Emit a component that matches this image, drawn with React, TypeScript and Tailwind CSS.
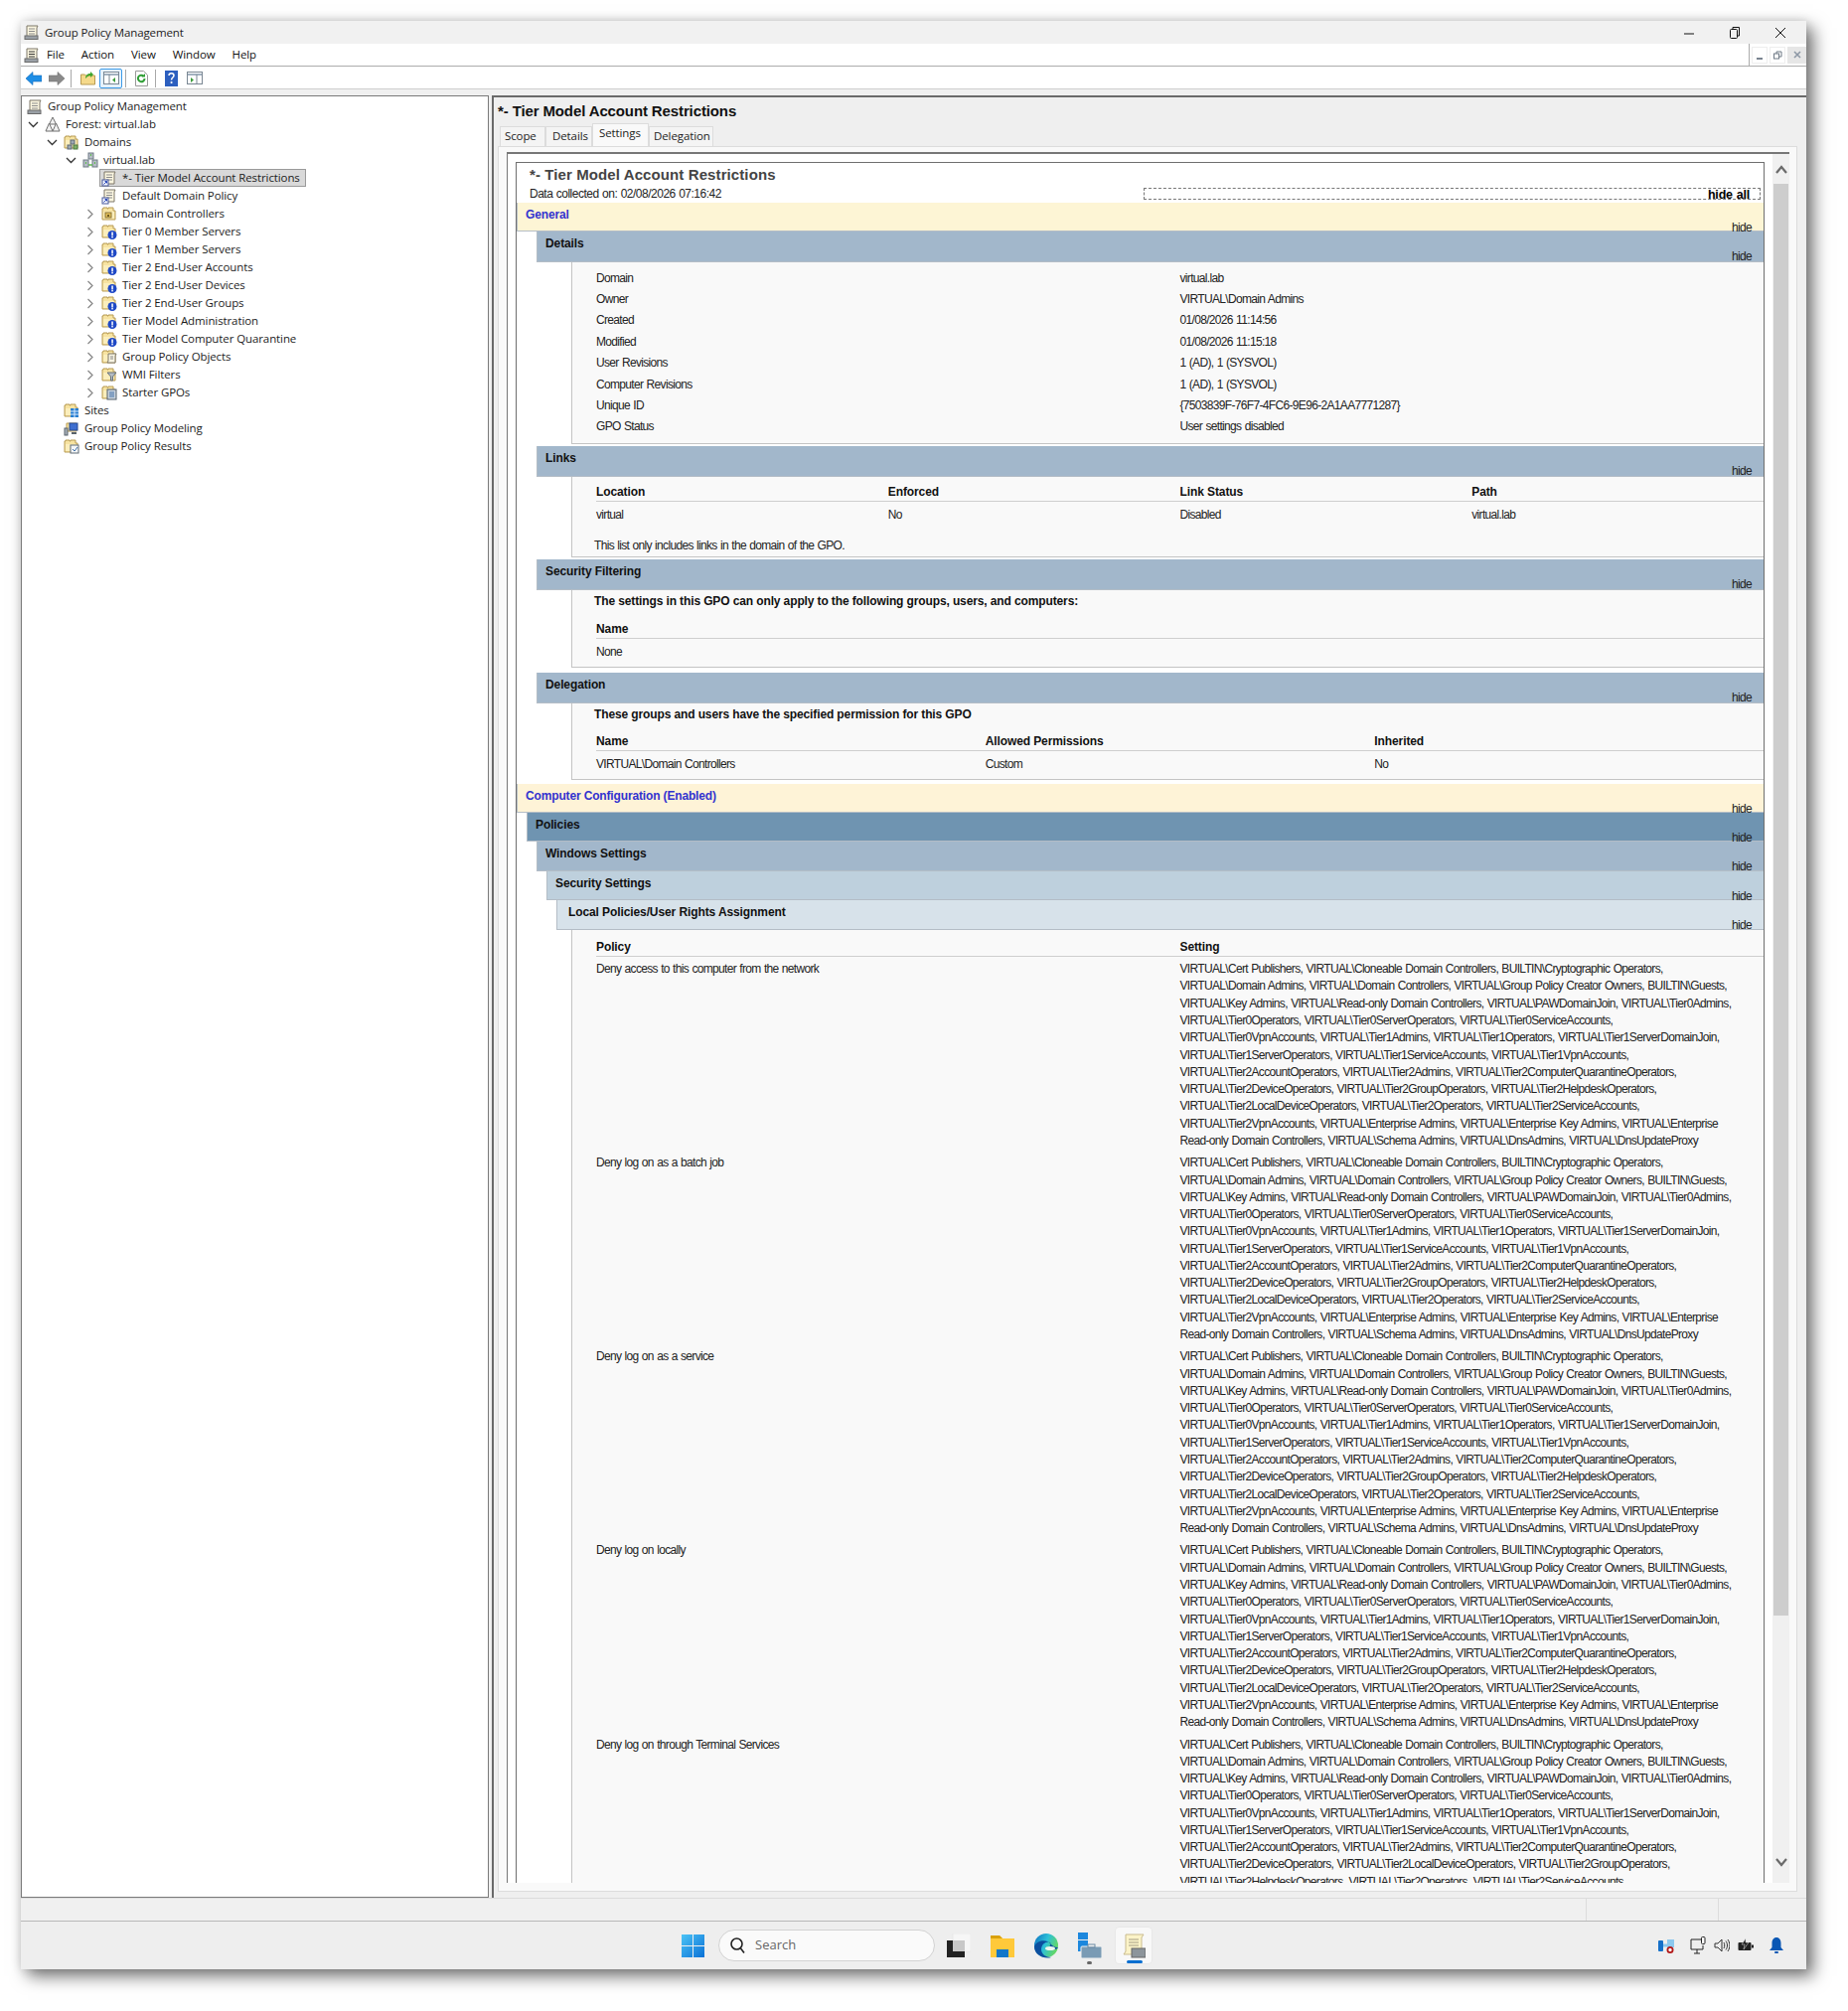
import React from "react";

const LINES = [
  "VIRTUAL\\Cert Publishers, VIRTUAL\\Cloneable Domain Controllers, BUILTIN\\Cryptographic Operators,",
  "VIRTUAL\\Domain Admins, VIRTUAL\\Domain Controllers, VIRTUAL\\Group Policy Creator Owners, BUILTIN\\Guests,",
  "VIRTUAL\\Key Admins, VIRTUAL\\Read-only Domain Controllers, VIRTUAL\\PAWDomainJoin, VIRTUAL\\Tier0Admins,",
  "VIRTUAL\\Tier0Operators, VIRTUAL\\Tier0ServerOperators, VIRTUAL\\Tier0ServiceAccounts,",
  "VIRTUAL\\Tier0VpnAccounts, VIRTUAL\\Tier1Admins, VIRTUAL\\Tier1Operators, VIRTUAL\\Tier1ServerDomainJoin,",
  "VIRTUAL\\Tier1ServerOperators, VIRTUAL\\Tier1ServiceAccounts, VIRTUAL\\Tier1VpnAccounts,",
  "VIRTUAL\\Tier2AccountOperators, VIRTUAL\\Tier2Admins, VIRTUAL\\Tier2ComputerQuarantineOperators,",
  "VIRTUAL\\Tier2DeviceOperators, VIRTUAL\\Tier2GroupOperators, VIRTUAL\\Tier2HelpdeskOperators,",
  "VIRTUAL\\Tier2LocalDeviceOperators, VIRTUAL\\Tier2Operators, VIRTUAL\\Tier2ServiceAccounts,",
  "VIRTUAL\\Tier2VpnAccounts, VIRTUAL\\Enterprise Admins, VIRTUAL\\Enterprise Key Admins, VIRTUAL\\Enterprise",
  "Read-only Domain Controllers, VIRTUAL\\Schema Admins, VIRTUAL\\DnsAdmins, VIRTUAL\\DnsUpdateProxy",
];
const LAST = [
  ...LINES.slice(0, 7),
  "VIRTUAL\\Tier2DeviceOperators, VIRTUAL\\Tier2LocalDeviceOperators, VIRTUAL\\Tier2GroupOperators,",
  "VIRTUAL\\Tier2HelpdeskOperators, VIRTUAL\\Tier2Operators, VIRTUAL\\Tier2ServiceAccounts,",
  "VIRTUAL\\Tier2VpnAccounts, VIRTUAL\\Enterprise Admins, VIRTUAL\\Enterprise Key Admins, VIRTUAL\\Enterprise",
  "Read-only Domain Controllers, VIRTUAL\\Schema Admins, VIRTUAL\\DnsAdmins, VIRTUAL\\DnsUpdateProxy",
];
const POLICIES: [string, string[]][] = [
  ["Deny access to this computer from the network", LINES],
  ["Deny log on as a batch job", LINES],
  ["Deny log on as a service", LINES],
  ["Deny log on locally", LINES],
  ["Deny log on through Terminal Services", LAST],
];
const DETAILS = [
  ["Domain", "virtual.lab"],
  ["Owner", "VIRTUAL\\Domain Admins"],
  ["Created", "01/08/2026 11:14:56"],
  ["Modified", "01/08/2026 11:15:18"],
  ["User Revisions", "1 (AD), 1 (SYSVOL)"],
  ["Computer Revisions", "1 (AD), 1 (SYSVOL)"],
  ["Unique ID", "{7503839F-76F7-4FC6-9E96-2A1AA7771287}"],
  ["GPO Status", "User settings disabled"],
];

const Folder = ({ children }: { children?: React.ReactNode }) => (
  <svg width="16" height="16" viewBox="0 0 16 16" className="shrink-0">
    <path d="M1 14V3h1V2h4v1h1V2h5v3h2v9z" fill="#f7e3a1" stroke="#b89b52" strokeWidth="1" />
    <path d="M2 6h11v7H2z" fill="#fbeebc" />
    {children}
  </svg>
);
const Excl = () => (
  <Folder>
    <circle cx="11" cy="11.5" r="4.5" fill="#1f49c6" />
    <rect x="10.3" y="8.5" width="1.5" height="4" fill="#fff" />
    <rect x="10.3" y="13" width="1.5" height="1.4" fill="#fff" />
  </Folder>
);
const Scroll = ({ link, box, dark }: { link?: boolean; box?: boolean; dark?: boolean }) => (
  <svg width="16" height="17" viewBox="0 0 16 17" className="shrink-0">
    <path d="M3 2h11l-1 2v10H2l1-2z" fill="#fbf6e0" stroke="#7d7768" />
    <path d="M5 5h6M5 7.5h6M5 10h6" stroke={dark ? "#333" : "#8b8b8b"} />
    {link && <rect x="1" y="10" width="6" height="6" fill="#f4f6ff" stroke="#4a5a9c" />}
    {link && <path d="M2.5 14.500l3-3M3.500 11.500h2v2" stroke="#2b49b8" fill="none" />}
    {box && <rect x="1" y="12" width="13" height="3.500" fill="#9aa0a6" stroke="#6b6b6b" />}
  </svg>
);
const TreeIcon = ({ k }: { k: string }) => {
  switch (k) {
    case "root":
      return <Scroll box />;
    case "forest":
      return (
        <svg width="16" height="16" viewBox="0 0 16 16" className="shrink-0" fill="#f1f1f1" stroke="#6f6f6f">
          <path d="M8 1l3.500 7h-7z" />
          <path d="M4.500 7L8 15H1z" />
          <path d="M11.500 7L15 15H8z" />
        </svg>
      );
    case "domains":
      return (
        <Folder>
          <rect x="7" y="6" width="4" height="4" fill="#9ea9b3" stroke="#5e6a74" />
          <rect x="4" y="11" width="4" height="4" fill="#9ea9b3" stroke="#5e6a74" />
          <rect x="10" y="11" width="4" height="4" fill="#7fb06b" stroke="#4d7a3f" />
        </Folder>
      );
    case "domain":
      return (
        <svg width="16" height="16" viewBox="0 0 16 16" className="shrink-0">
          <rect x="6" y="1" width="5" height="6" fill="#b6bec6" stroke="#6e7a84" />
          <rect x="1" y="8" width="5" height="7" fill="#b6bec6" stroke="#6e7a84" />
          <rect x="10" y="8" width="5" height="7" fill="#b6bec6" stroke="#6e7a84" />
          <path d="M3 11h1M12 11h1M8 3h1" stroke="#5cb84c" strokeWidth="2" />
          <path d="M6 13h4" stroke="#5cb84c" strokeWidth="1.500" />
        </svg>
      );
    case "gpoSel":
    case "gpo":
      return <Scroll link />;
    case "ou":
      return (
        <Folder>
          <rect x="4" y="7" width="6" height="5" fill="#e0bd5a" stroke="#8a7230" />
          <rect x="6" y="9" width="2" height="2" fill="#6f5a1f" />
        </Folder>
      );
    case "warn":
      return <Excl />;
    case "gpos":
      return (
        <Folder>
          <path d="M7 5h8l-1 2v7H6l1-2z" fill="#f8f4e2" stroke="#7d7768" />
          <path d="M9 8h3M9 10h3" stroke="#888" />
        </Folder>
      );
    case "wmi":
      return (
        <Folder>
          <path d="M6 6h9l-3.500 4v4h-2v-4z" fill="#b4bcc4" stroke="#66717b" />
        </Folder>
      );
    case "starter":
      return (
        <Folder>
          <rect x="6" y="5" width="9" height="10" fill="#c8d2dc" stroke="#55616d" />
          <path d="M8 8h5M8 10h5M8 12h5" stroke="#3f6fa8" />
        </Folder>
      );
    case "sites":
      return (
        <Folder>
          <rect x="7" y="6" width="8" height="9" fill="#2a7fd0" />
          <path d="M7 9h8M7 12h8M11 6v9" stroke="#dcecff" />
        </Folder>
      );
    case "modeling":
      return (
        <svg width="16" height="16" viewBox="0 0 16 16" className="shrink-0">
          <path d="M3 3h10v8H3z" fill="#f7e3a1" stroke="#b89b52" />
          <rect x="1" y="8" width="3" height="7" fill="#a8b0b8" stroke="#59636d" />
          <rect x="6" y="3" width="8" height="7" fill="#3f6fd0" stroke="#274a94" />
          <path d="M8 13h5" stroke="#59636d" strokeWidth="2" />
        </svg>
      );
    default:
      return (
        <Folder>
          <rect x="7" y="7" width="8" height="8" fill="#f4f6f8" stroke="#5f6a75" />
          <path d="M9 11l2 2 3-4" stroke="#3f6fa8" fill="none" />
        </Folder>
      );
  }
};

const TREE: [string, string, number, string, boolean?][] = [
  ["Group Policy Management", "root", 0, "none"],
  ["Forest: virtual.lab", "forest", 1, "open"],
  ["Domains", "domains", 2, "open"],
  ["virtual.lab", "domain", 3, "open"],
  ["*- Tier Model Account Restrictions", "gpoSel", 4, "none", true],
  ["Default Domain Policy", "gpo", 4, "none"],
  ["Domain Controllers", "ou", 4, "closed"],
  ["Tier 0 Member Servers", "warn", 4, "closed"],
  ["Tier 1 Member Servers", "warn", 4, "closed"],
  ["Tier 2 End-User Accounts", "warn", 4, "closed"],
  ["Tier 2 End-User Devices", "warn", 4, "closed"],
  ["Tier 2 End-User Groups", "warn", 4, "closed"],
  ["Tier Model Administration", "warn", 4, "closed"],
  ["Tier Model Computer Quarantine", "warn", 4, "closed"],
  ["Group Policy Objects", "gpos", 4, "closed"],
  ["WMI Filters", "wmi", 4, "closed"],
  ["Starter GPOs", "starter", 4, "closed"],
  ["Sites", "sites", 2, "none"],
  ["Group Policy Modeling", "modeling", 2, "none"],
  ["Group Policy Results", "results", 2, "none"],
];
const PAD = ["pl-[3px]", "pl-[2px]", "pl-[21px]", "pl-[40px]", "pl-[59px]"];

const Chevron = ({ kind }: { kind: string }) =>
  kind === "open" ? (
    <svg width="19" height="18" viewBox="0 0 19 18" className="shrink-0">
      <path d="M5 7l4.500 4.500L14 7" fill="none" stroke="#333" strokeWidth="1.300" />
    </svg>
  ) : kind === "closed" ? (
    <svg width="19" height="18" viewBox="0 0 19 18" className="shrink-0">
      <path d="M7.500 5l4.500 4.500L7.500 14" fill="none" stroke="#8a8a8a" strokeWidth="1.300" />
    </svg>
  ) : (
    <span className="w-[19px] shrink-0" />
  );

const Tree = () => (
  <div className="font-['Open_Sans',sans-serif] text-[11.5px] tracking-[-0.1px] text-[#1c1c1c]">
    {TREE.map(([label, icon, depth, chev, sel]) => (
      <div key={label} className={`flex h-[18px] items-center ${PAD[depth]}`}>
        {depth > 0 && <Chevron kind={chev} />}
        <div className={`flex h-[18px] items-center gap-[5px] border pl-[1px] pr-[5px] whitespace-nowrap ${sel ? "border-[#9a9a9a] bg-[#d9d9d9]" : "border-transparent"}`}>
          <TreeIcon k={icon} />
          <span>{label}</span>
        </div>
      </div>
    ))}
  </div>
);

const Band = ({ label, h, bg, ml, blue, pad }: { label: string; h: string; bg: string; ml: string; blue?: boolean; pad?: string }) => (
  <div className={`flex shrink-0 justify-between ${h} ${bg} ${ml} border-b border-l border-[#b4bdc6]`}>
    <span className={`${pad ?? "pl-[8px]"} pt-[5px] leading-[14px] font-bold [word-spacing:0px] ${blue ? "tracking-[-0.15px] text-[#3232cf]" : "tracking-[-0.1px] text-[#111]"}`}>{label}</span>
    <span className="pr-[12px] pt-[18px] leading-[14px] text-[#222]">hide</span>
  </div>
);

const Head = ({ t }: { t: string }) => (
  <div className="flex h-[21px] items-center border-b border-[#cfcfcf] pt-[2px] font-bold tracking-[-0.1px] [word-spacing:0px] text-[#111]">{t}</div>
);
const Cell = ({ t }: { t: string }) => <div className="flex h-[24px] items-center pt-[2px]">{t}</div>;
const Block = ({ cls, children }: { cls: string; children: React.ReactNode }) => (
  <div className={`ml-[55px] shrink-0 border-b border-l border-[#c4c4c4] bg-[#f9f9f9] pl-[24px] ${cls}`}>{children}</div>
);
const Lead = ({ t }: { t: string }) => <div className="-ml-[2px] flex h-[21px] items-center font-bold tracking-[-0.12px] [word-spacing:0px] text-[#111]">{t}</div>;

const Report = () => (
  <div className="flex min-h-0 flex-1 flex-col overflow-hidden border-x border-t border-[#6f6f6f] bg-white font-['Liberation_Sans',sans-serif] text-[12px] text-[#222] tracking-[-0.67px] [word-spacing:0.6px]">
    <div className="h-[40px] shrink-0 pl-[13px]">
      <div className="h-[22px] pt-[3px] text-[15px] leading-[18px] font-bold tracking-[0.1px] [word-spacing:0px] text-[#444]">*- Tier Model Account Restrictions</div>
      <div className="flex h-[18px] items-start">
        <div className="w-[618px] pt-[2px] leading-[14px] tracking-[-0.5px]">Data collected on: 02/08/2026 07:16:42</div>
        <div className="mr-[3px] mt-[3px] h-[12px] flex-1 border border-dashed border-[#777] pr-[10px] text-right text-[12.5px] leading-[12px] font-bold tracking-[-0.2px] text-black">hide all</div>
      </div>
    </div>
    <Band label="General" h="h-[29px]" bg="bg-[#fdf5d5]" ml="" blue />
    <Band label="Details" h="h-[31px]" bg="bg-[#a2b7cb]" ml="ml-[20px]" />
    <Block cls="pt-[5px] pb-[6px] mb-[2px]">
      {DETAILS.map(([a, b]) => (
        <div key={a} className="grid h-[21.4px] grid-cols-2 items-center">
          <span>{a}</span>
          <span>{b}</span>
        </div>
      ))}
    </Block>
    <Band label="Links" h="h-[31px]" bg="bg-[#a2b7cb]" ml="ml-[20px]" />
    <Block cls="pt-[4px] mb-[2px]">
      <div className="grid grid-cols-4">
        {["Location", "Enforced", "Link Status", "Path"].map((t) => <Head key={t} t={t} />)}
        {["virtual", "No", "Disabled", "virtual.lab"].map((t) => <Cell key={t} t={t} />)}
      </div>
      <div className="-ml-[2px] mt-[9px] flex h-[22px] items-center">This list only includes links in the domain of the GPO.</div>
    </Block>
    <Band label="Security Filtering" h="h-[31px]" bg="bg-[#a2b7cb]" ml="ml-[20px]" />
    <Block cls="pb-[4px] mb-[5px]">
      <Lead t="The settings in this GPO can only apply to the following groups, users, and computers:" />
      <div className="mt-[7px]">
        <Head t="Name" />
        <Cell t="None" />
      </div>
    </Block>
    <Band label="Delegation" h="h-[31px]" bg="bg-[#a2b7cb]" ml="ml-[20px]" />
    <Block cls="pb-[4px] mb-[4px]">
      <Lead t="These groups and users have the specified permission for this GPO" />
      <div className="mt-[6px] grid grid-cols-3">
        {["Name", "Allowed Permissions", "Inherited"].map((t) => <Head key={t} t={t} />)}
        {["VIRTUAL\\Domain Controllers", "Custom", "No"].map((t) => <Cell key={t} t={t} />)}
      </div>
    </Block>
    <Band label="Computer Configuration (Enabled)" h="h-[29px]" bg="bg-[#fef3d7]" ml="" blue />
    <Band label="Policies" h="h-[29px]" bg="bg-[#6f94b1]" ml="ml-[10px]" />
    <Band label="Windows Settings" h="h-[30px]" bg="bg-[#a2b7cb]" ml="ml-[20px]" />
    <Band label="Security Settings" h="h-[29px]" bg="bg-[#bed0dd]" ml="ml-[30px]" />
    <Band label="Local Policies/User Rights Assignment" h="h-[30px]" bg="bg-[#d7e2ea]" ml="ml-[40px]" pad="pl-[11px]" />
    <div className="ml-[55px] shrink-0 border-l border-[#c4c4c4] bg-[#f9f9f9] pl-[24px] pt-[6px]">
      <div className="grid grid-cols-2">
        <Head t="Policy" />
        <Head t="Setting" />
      </div>
      {POLICIES.map(([name, lines]) => (
        <div key={name} className="grid grid-cols-2 pt-[4px] pb-[1px] leading-[17.28px]">
          <div>{name}</div>
          <div className="whitespace-nowrap">
            {lines.map((l, i) => <div key={i}>{l}</div>)}
          </div>
        </div>
      ))}
    </div>
  </div>
);

const Scrollbar = () => (
  <div className="flex w-[17px] shrink-0 flex-col items-center bg-[#f0f0f0]">
    <svg width="16" height="26" viewBox="0 0 16 26" className="shrink-0 mt-[4px]">
      <path d="M3 21l5-6 5 6" fill="none" stroke="#6a6a6a" strokeWidth="2.200" transform="translate(0,-6)" />
    </svg>
    <div className="h-[1441px] w-[15px] shrink-0 bg-[#cdcdcd]" />
    <div className="flex-1" />
    <svg width="16" height="26" viewBox="0 0 16 26" className="shrink-0 mb-[8px]">
      <path d="M3 10l5 6 5-6" fill="none" stroke="#6a6a6a" strokeWidth="2.200" />
    </svg>
  </div>
);

const TAB = "flex h-[20px] items-center border border-b-0 border-[#dcdcdc] bg-[#f4f4f4] pb-[2px]";

const Right = () => (
  <div className="flex min-w-0 flex-1 flex-col border-l-2 border-t-2 border-[#6a6a6a] bg-[#efefef]">
    <div className="h-[26px] shrink-0 pl-[4px] pt-[5px] font-['Liberation_Sans',sans-serif] text-[15px] leading-[18px] font-bold tracking-[-0.12px] text-[#111]">*- Tier Model Account Restrictions</div>
    <div className="ml-[6px] flex h-[23px] shrink-0 items-end font-['Open_Sans',sans-serif] text-[11.5px] tracking-[-0.1px] text-[#222]">
      <div className={`${TAB} w-[46px] pl-[4px]`}>Scope</div>
      <div className={`${TAB} w-[47px] pl-[6px]`}>Details</div>
      <div className="flex h-[23px] w-[57px] items-start border border-b-0 border-[#dcdcdc] bg-[#f9f9f9] pl-[6px]">Settings</div>
      <div className={`${TAB} w-[65px] pl-[4px]`}>Delegation</div>
    </div>
    <div className="mb-[6px] ml-[4px] mr-[9px] flex min-h-0 flex-1 flex-col border border-[#dcdcdc] bg-[#f9f9f9] pb-[8px] pl-[8px] pr-[7px] pt-[5px]">
      <div className="flex min-h-0 flex-1 border-l border-t-2 border-[#777] bg-white">
        <div className="flex min-w-0 flex-1 flex-col pl-[8px] pt-[8px]">
          <Report />
        </div>
        <div className="w-[8px] shrink-0" />
        <Scrollbar />
      </div>
    </div>
  </div>
);

const Sep = ({ cls }: { cls: string }) => <div className={`h-[18px] w-px shrink-0 bg-[#a8a8a8] ${cls}`} />;

const Toolbar = () => (
  <div className="flex h-[23px] shrink-0 items-center border-b border-[#cfcfcf] bg-white pl-[5px] pt-[1px]">
    <svg width="16" height="14" viewBox="0 0 16 14" className="shrink-0"><path d="M0 7l7-6.500V4h9v6H7v3.500z" fill="#1e8ee6" stroke="#1268b8" strokeWidth="0.600" /></svg>
    <svg width="16" height="14" viewBox="0 0 16 14" className="ml-[7px] shrink-0"><path d="M16 7L9 .5V4H0v6h9v3.500z" fill="#8a8a8a" stroke="#707070" strokeWidth="0.600" /></svg>
    <Sep cls="ml-[6px]" />
    <svg width="15" height="15" viewBox="0 0 15 15" className="ml-[9px] shrink-0"><path d="M.5 14V4h4l1 1h9v9z" fill="#f5d98a" stroke="#b89b52" /><path d="M5 8c0-3 2-5 5-5V1l3 3-3 3V5c-2 0-3 1-5 3z" fill="#3fa52c" /></svg>
    <div className="ml-[4px] flex h-[20px] w-[23px] shrink-0 items-center justify-center rounded-[2px] border border-[#3d9be8] bg-[#e5f1fb]">
      <svg width="16" height="13" viewBox="0 0 16 13"><rect x=".5" y=".5" width="15" height="12" fill="#fff" stroke="#7a8793" /><path d="M1 3h14" stroke="#a3b2c0" strokeWidth="2" /><path d="M6 3v9" stroke="#7a8793" /><path d="M12 6l-3 2.500 3 2.500z" fill="#3a9a3a" /></svg>
    </div>
    <Sep cls="ml-[3px]" />
    <svg width="13" height="16" viewBox="0 0 13 16" className="ml-[9px] shrink-0"><path d="M.5.5h8l4 4v11H.5z" fill="#fff" stroke="#9a9a9a" /><path d="M9.500 8a3.300 3.300 0 1 1-1-2.400" fill="none" stroke="#2f9e35" strokeWidth="2" /><path d="M10 3v3.500H6.500z" fill="#2f9e35" /></svg>
    <Sep cls="ml-[7px]" />
    <svg width="13" height="16" viewBox="0 0 13 16" className="ml-[9px] shrink-0"><rect width="13" height="16" fill="#2c5fbf" /><path d="M4 5c0-3 5-3 5 0 0 2-2.500 2-2.500 4.500" fill="none" stroke="#fff" strokeWidth="1.500" /><rect x="5.700" y="11" width="1.700" height="2" fill="#fff" /></svg>
    <svg width="16" height="13" viewBox="0 0 16 13" className="ml-[9px] shrink-0"><rect x=".5" y=".5" width="15" height="12" fill="#fff" stroke="#7a8793" /><path d="M1 3h14" stroke="#a3b2c0" strokeWidth="2" /><path d="M10 3v9" stroke="#7a8793" /><path d="M4 6l3 2.500-3 2.500z" fill="#3a9a3a" /></svg>
  </div>
);

const Taskbar = () => (
  <div className="flex h-[48px] shrink-0 items-center bg-[#eeeeee] pl-[665px] font-['Open_Sans',sans-serif]">
    <svg width="23" height="23" viewBox="0 0 23 23" className="shrink-0">
      <defs><linearGradient id="w" x1="0" y1="0" x2="1" y2="1"><stop offset="0" stopColor="#4cc4f6" /><stop offset="1" stopColor="#0a70d6" /></linearGradient></defs>
      <path d="M0 0h11v11H0zM12 0h11v11H12zM0 12h11v11H0zM12 12h11v11H12z" fill="url(#w)" />
    </svg>
    <div className="ml-[14px] flex h-[32px] w-[218px] shrink-0 items-center rounded-full border border-[#d2d2d2] bg-[#fafafa] pl-[11px] text-[13px] text-[#666]">
      <svg width="15" height="16" viewBox="0 0 15 16"><circle cx="6.500" cy="6.500" r="5.500" fill="none" stroke="#222" strokeWidth="1.600" /><path d="M10.500 11l3.500 4.500" stroke="#222" strokeWidth="1.600" /></svg>
      <span className="ml-[10px]">Search</span>
    </div>
    <svg width="24" height="24" viewBox="0 0 24 24" className="ml-[12px] shrink-0">
      <rect x="6" y="0" width="18" height="18" fill="#f6f6f6" stroke="#e0e0e0" strokeWidth=".5" />
      <rect x="0" y="7" width="18" height="17" fill="#222" />
      <rect x="6" y="7" width="12" height="11" fill="#c8c8c8" />
    </svg>
    <svg width="24" height="24" viewBox="0 0 24 24" className="ml-[20px] shrink-0">
      <path d="M0 2h9l3 3h12v19H0z" fill="#ffc93a" />
      <path d="M0 2h9l3 3H0z" fill="#d9a10d" />
      <rect x="6" y="16" width="12" height="8" fill="#1277c9" />
    </svg>
    <svg width="24" height="26" viewBox="0 0 24 26" className="ml-[20px] shrink-0">
      <defs><linearGradient id="e" x1="0" y1="0" x2="1" y2="0.400"><stop offset="0" stopColor="#0b6fc0" /><stop offset=".55" stopColor="#2cc0d8" /><stop offset="1" stopColor="#62d66a" /></linearGradient></defs>
      <circle cx="12" cy="13" r="12" fill="url(#e)" />
      <path d="M24 15c-2 3-7 3-8 0-1-2 1-4 0-5-3-2-9 1-9 7 0 5 5 8 10 8-7 2-17-2-17-11 4-8 14-6 16-3 2 2 4 4 8 4z" fill="#0b4f9e" />
      <ellipse cx="16" cy="16" rx="5" ry="2" fill="#ecf7ef" />
    </svg>
    <div className="relative ml-[20px] h-[26px] w-[24px] shrink-0">
      <svg width="24" height="26" viewBox="0 0 24 26">
        <rect x="0" y="0" width="10" height="7" fill="#1c87dd" />
        <rect x="0" y="8" width="10" height="11" fill="#1c87dd" />
        <rect x="3" y="14" width="21" height="12" rx="1" fill="#7a9bb4" stroke="#f2f2f2" />
        <rect x="10" y="12" width="7" height="3" fill="none" stroke="#6b8aa3" />
      </svg>
      <span className="absolute left-[9px] top-[29px] h-[3px] w-[5px] rounded-full bg-[#666]" />
    </div>
    <div className="relative ml-[13px] flex h-[38px] w-[38px] shrink-0 items-start justify-center rounded-[4px] border border-[#e8e8e8] bg-[#f8f8f8] pt-[6px]">
      <svg width="23" height="26" viewBox="0 0 23 26">
        <path d="M3 1h18l-2 3v17H1l2-3z" fill="#fbf3c8" stroke="#c9bb8f" />
        <path d="M6 6h10M6 9h10M6 12h10" stroke="#a59e84" />
        <rect x="9" y="15" width="14" height="9" fill="#8d959b" stroke="#666" />
      </svg>
      <span className="absolute bottom-[0px] left-[11px] h-[3px] w-[16px] rounded-full bg-[#0a6fd0]" />
    </div>
    <div className="ml-[509px] flex items-center">
      <svg width="16" height="16" viewBox="0 0 16 16" className="shrink-0"><rect x="0" y="3" width="5" height="11" rx="1" fill="#1570c9" /><rect x="9" y="2" width="7" height="8" fill="#8cc8ee" /><path d="M5 8h4" stroke="#8cc8ee" strokeWidth="3" /><circle cx="12" cy="12.500" r="2.600" fill="#fff" stroke="#b21818" strokeWidth="1.800" /></svg>
      <svg width="16" height="18" viewBox="0 0 16 18" className="ml-[16px] shrink-0"><path d="M11 3H1v10h12V9M4 17h6M7 13v4" fill="none" stroke="#222" /><rect x="11.500" y="0.500" width="3.500" height="7" rx="1" fill="#fff" stroke="#222" /></svg>
      <svg width="16" height="16" viewBox="0 0 16 16" className="ml-[8px] shrink-0"><path d="M1 6h3l4-4v12l-4-4H1zM10 5c1 2 1 4 0 6M12 3.500c2 3 2 6 0 9M14 2c2.500 4 2.500 8 0 12" fill="none" stroke="#333" /></svg>
      <svg width="16" height="14" viewBox="0 0 16 14" className="ml-[8px] shrink-0"><rect x="0.500" y="4" width="13" height="8" rx="1" fill="#222" /><rect x="14" y="6.500" width="2" height="3" fill="#222" /><path d="M8 0L4 6h3l-1 5 5-7H8z" fill="#222" stroke="#eee" strokeWidth=".5" /></svg>
      <svg width="14" height="16" viewBox="0 0 14 16" className="ml-[16px] shrink-0"><path d="M7 0c3 0 4.500 2.500 4.500 5.500V10l2.500 3H0l2.500-3V5.500C2.500 2.500 4 0 7 0z" fill="#0a57b4" /><rect x="5" y="14" width="4" height="2" rx="1" fill="#0a57b4" /></svg>
    </div>
  </div>
);

export default function App() {
  return (
    <div className="h-[2024px] w-[1860px] overflow-hidden bg-white pl-[21px] pt-[21px]">
      <div className="flex h-[1961px] w-[1797px] flex-col bg-[#f0f0f0] shadow-[7px_7px_16px_rgba(0,0,0,0.55),0_0_10px_rgba(0,0,0,0.12)]">
        <div className="flex h-[23px] shrink-0 items-center bg-[#f1f1f1] pl-[3px] font-['Open_Sans',sans-serif] text-[11.5px] tracking-[-0.1px] text-[#222]">
          <Scroll box />
          <span className="ml-[5px]">Group Policy Management</span>
          <div className="flex-1" />
          <svg width="12" height="12" viewBox="0 0 12 12" className="mr-[34px]"><path d="M1 7h10" stroke="#111" /></svg>
          <svg width="12" height="14" viewBox="0 0 12 14" className="mr-[34px]"><rect x="1.500" y="3.500" width="7" height="9" rx="1" fill="none" stroke="#111" /><path d="M4 3V1.500h6.500V10H9" fill="none" stroke="#111" /></svg>
          <svg width="12" height="12" viewBox="0 0 12 12" className="mr-[20px]"><path d="M1 1l10 10M11 1L1 11" stroke="#111" /></svg>
        </div>
        <div className="flex h-[23px] shrink-0 items-center border-b border-[#acacac] bg-white pl-[3px] font-['Open_Sans',sans-serif] text-[11.5px] tracking-[-0.1px] text-[#111]">
          <Scroll box dark />
          <span className="ml-[7px]">File</span>
          <span className="ml-[17px]">Action</span>
          <span className="ml-[17px]">View</span>
          <span className="ml-[17px]">Window</span>
          <span className="ml-[17px]">Help</span>
          <div className="flex-1" />
          <div className="flex h-[22px] items-center gap-[2px] border-l border-[#acacac] bg-white pl-[2px]">
            <div className="flex h-[17px] w-[16px] items-end justify-center border border-[#eee] pb-[3px]"><div className="h-[2px] w-[6px] bg-[#7a8490]" /></div>
            <div className="flex h-[17px] w-[16px] items-center justify-center border border-[#eee]"><svg width="9" height="9" viewBox="0 0 9 9"><rect x=".5" y="3" width="5" height="5" fill="none" stroke="#6d7884" /><path d="M3 3V1h5v5H6" fill="none" stroke="#6d7884" /></svg></div>
            <div className="flex h-[17px] w-[19px] items-center justify-center bg-[#e6e6e6]"><svg width="8" height="8" viewBox="0 0 8 8"><path d="M1 1l6 6M7 1L1 7" stroke="#8d98a5" strokeWidth="1.600" /></svg></div>
          </div>
        </div>
        <Toolbar />
        <div className="flex min-h-0 flex-1 pt-[6px]">
          <div className="w-[471px] shrink-0 border border-[#7a7a7a] bg-white pt-[1px]">
            <Tree />
          </div>
          <div className="w-[3px] shrink-0" />
          <Right />
        </div>
        <div className="flex h-[24px] shrink-0 justify-end border-b border-t border-b-[#b8b8b8] border-t-[#dcdcdc] bg-[#f0f0f0] pr-[4px]">
          <div className="w-[133px] border-l border-[#dcdcdc]" />
          <div className="w-[85px] border-l border-[#dcdcdc]" />
        </div>
        <Taskbar />
      </div>
    </div>
  );
}
